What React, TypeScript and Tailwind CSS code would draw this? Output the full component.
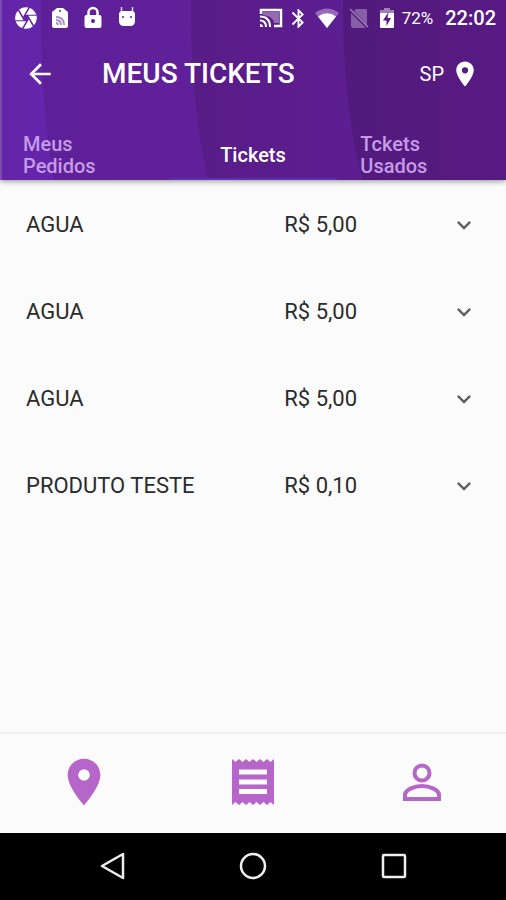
import React from "react";
import {
  MdArrowBack,
  MdBluetooth,
  MdCamera,
  MdExpandMore,
  MdLocationOn,
} from "react-icons/md";

const tickets = [
  { id: 1, title: "AGUA", price: "R$ 5,00" },
  { id: 2, title: "AGUA", price: "R$ 5,00" },
  { id: 3, title: "AGUA", price: "R$ 5,00" },
  { id: 4, title: "PRODUTO TESTE", price: "R$ 0,10" },
];

const HeaderPattern = () => (
  <svg
    className="absolute inset-0 w-full h-full"
    viewBox="0 0 506 180"
    preserveAspectRatio="none"
    aria-hidden="true"
  >
    <defs>
      <linearGradient id="band1">
        <stop offset="0" stopColor="#6325a8" />
        <stop offset="0.1" stopColor="#6525ab" />
      </linearGradient>
      <linearGradient id="band2">
        <stop offset="0" stopColor="#5e2098" />
        <stop offset="0.35" stopColor="#60209a" />
      </linearGradient>
      <linearGradient id="band3">
        <stop offset="0" stopColor="#581c86" />
        <stop offset="0.5" stopColor="#5d1e92" />
      </linearGradient>
      <linearGradient id="band4">
        <stop offset="0" stopColor="#521a7c" />
        <stop offset="1" stopColor="#581a84" />
      </linearGradient>
    </defs>
    <rect width="506" height="180" fill="url(#band1)" />
    <path d="M41 0Q40 100 54 180H506V0z" fill="url(#band2)" />
    <path d="M191 0Q190 100 208 180H506V0z" fill="url(#band3)" />
    <path d="M343 0Q342 100 362 180H506V0z" fill="url(#band4)" />
    <rect width="2" height="180" fill="#7c4bb0" />
  </svg>
);

const StatusBar = () => (
  <div className="flex items-center justify-between h-9 pl-[13px] pr-[10px]">
    {/* notifications */}
    <div className="flex items-center gap-[11px]">
      <MdCamera size={26} />
      <svg width="20" height="22" viewBox="0 0 20 22">
        <path d="M7 1h6l5 4v14q0 2-2 2H4q-2 0-2-2V5z" fill="currentColor" />
        <circle cx="10" cy="4" r="1" fill="#5e2098" />
        <path d="M6 10q8 0 8 8M6 13q5 0 5 5M6 16q2 0 2 2" fill="none" stroke="#a890c4" strokeWidth="2" />
      </svg>
      <svg width="24" height="24" viewBox="0 0 22 24">
        <path d="M6.500 11V6.500a4.500 4.500 0 0 1 9 0V11" fill="none" stroke="currentColor" strokeWidth="2.500" />
        <rect x="2.500" y="9" width="17" height="13" rx="2" fill="currentColor" />
        <circle cx="11" cy="15" r="2" fill="#5e2098" />
      </svg>
      <svg width="22" height="24" viewBox="0 0 22 24">
        <path d="M5.500 1v7M16.500 1v7" stroke="currentColor" strokeWidth="1.500" opacity="0.800" />
        <path d="M5 5h12l2 2v8q0 5-5 5H8q-5 0-5-5V7z" fill="currentColor" />
        <circle cx="7" cy="11" r="1" fill="#5e2098" />
        <circle cx="15" cy="11" r="1" fill="#5e2098" />
      </svg>
    </div>
    {/* system */}
    <div className="flex items-center">
      <svg width="24" height="22" viewBox="0 0 24 22">
        <path d="M4 5h16v11h-5Q14 9 4 8z" fill="currentColor" opacity="0.350" />
        <path d="M2 7V3h20v16h-7" fill="none" stroke="currentColor" strokeWidth="2.500" />
        <path d="M1 9.500q10 0 10 10.500M1 13.500q6 0 6 6.500" fill="none" stroke="currentColor" strokeWidth="2" />
        <path d="M1 17q3 0 3 3H1z" fill="currentColor" />
      </svg>
      <MdBluetooth size={23} className="ml-1" />
      <svg className="ml-1" width="26" height="20" viewBox="0 0 26 20">
        <path d="M1 5Q13-4 25 5L13 20z" fill="currentColor" opacity="0.350" />
        <path d="M4 8.500Q13 2 22 8.500L13 20z" fill="currentColor" />
      </svg>
      <svg className="ml-[9px]" width="20" height="22" viewBox="0 0 20 22">
        <path d="M7 2h10q1 0 1 1v15L5 4zM2 6l15 15H4q-2 0-2-2z" fill="currentColor" opacity="0.300" />
        <path d="M1 2l18 18" stroke="currentColor" strokeWidth="1.500" opacity="0.450" />
      </svg>
      <svg className="ml-[9px]" width="18" height="22" viewBox="0 0 18 22">
        <path d="M6 1h6v2h4v5H2V3h4z" fill="currentColor" opacity="0.450" />
        <path d="M2 6h14v14q0 1-1 1H3q-1 0-1-1z" fill="currentColor" />
        <path d="M10.500 5L5 13.500h3.500V19L13 11H9.500z" fill="#521a7c" />
      </svg>
      <span className="ml-[6px] text-[17px] leading-5">72%</span>
      <span className="ml-3 text-[20px] leading-5 font-medium">22:02</span>
    </div>
  </div>
);

const Header = () => (
  <header className="relative text-white shadow-[0_1px_6px_rgba(0,0,0,0.45)]">
    <HeaderPattern />
    <div className="relative">
      <StatusBar />
      <div className="flex items-center h-[76px] pl-6 pr-[26px]">
        <button type="button" aria-label="Voltar">
          <MdArrowBack size={32} />
        </button>
        <h1 className="flex-1 ml-[46px] text-[28px] leading-8 font-medium">MEUS TICKETS</h1>
        <button type="button" className="flex items-center gap-[6px] text-[20px] leading-6">
          SP
          <MdLocationOn size={30} />
        </button>
      </div>
      {/* tabs */}
      <nav className="grid grid-cols-3 h-[50px] mt-[18px] text-[20px] leading-[22px] font-medium text-[#c59ae6]">
        <a href="#pedidos" className="flex items-center px-[23px]">
          Meus
          <br />
          Pedidos
        </a>
        <a
          href="#tickets"
          aria-current="page"
          className="flex items-center justify-center text-white border-b-2 border-[#5f2db8] pt-[2px]"
        >
          Tickets
        </a>
        <a href="#usados" className="flex items-center px-[23px]">
          Tckets
          <br />
          Usados
        </a>
      </nav>
    </div>
  </header>
);

const TicketList = () => (
  <main className="flex-1">
    <ul className="pt-px">
      {tickets.map((item) => (
        <li key={item.id}>
          <button
            type="button"
            aria-expanded="false"
            className="grid grid-cols-[4fr_3fr] items-center w-full h-[87px] pl-[26px] pr-7 text-left text-[22px] leading-7 text-[#2b2b2b]"
          >
            <span>{item.title}</span>
            <span className="flex items-center justify-between">
              {item.price}
              <MdExpandMore size={28} className="text-[#616161]" />
            </span>
          </button>
        </li>
      ))}
    </ul>
  </main>
);

const BottomNav = () => (
  <nav className="grid grid-cols-3 h-[101px] pb-1 border-t-2 border-[#f0f0f0] text-[#b566c8]">
    <a href="#local" aria-label="Local" className="flex items-center justify-center">
      <MdLocationOn size={56} />
    </a>
    <a href="#tickets" aria-label="Tickets" className="flex items-center justify-center">
      <svg width="42" height="46" viewBox="0 0 42 46" fill="currentColor" fillRule="evenodd">
        <path d="M0 0l3.500 3L7 0l3.500 3L14 0l3.500 3L21 0l3.500 3L28 0l3.500 3L35 0l3.500 3L42 0v46l-3.500-3L35 46l-3.500-3L28 46l-3.500-3L21 46l-3.500-3L14 46l-3.500-3L7 46l-3.500-3L0 46zM7 10.500v5h28v-5zM7 20.500v5h28v-5zM7 30v5h28v-5z" />
      </svg>
    </a>
    <a href="#perfil" aria-label="Perfil" className="flex items-center justify-center">
      <svg width="56" height="56" viewBox="0 0 56 56" fill="none" stroke="currentColor" strokeWidth="4">
        <circle cx="28" cy="19" r="7.500" />
        <path d="M11 45v-4c0-5 9-9 17-9s17 4 17 9v4z" />
      </svg>
    </a>
  </nav>
);

const SystemNav = () => (
  <div className="grid grid-cols-3 h-[67px] pb-px px-[42px] bg-black text-[#eeeeee]">
    <button type="button" aria-label="Back" className="flex items-center justify-center">
      <svg width="30" height="30" viewBox="0 0 30 30" fill="none" stroke="currentColor" strokeWidth="2.500">
        <path d="M26 3v24L5 15z" strokeLinejoin="round" />
      </svg>
    </button>
    <button type="button" aria-label="Home" className="flex items-center justify-center">
      <svg width="30" height="30" viewBox="0 0 30 30" fill="none" stroke="currentColor" strokeWidth="2.500">
        <circle cx="15" cy="15" r="12" />
      </svg>
    </button>
    <button type="button" aria-label="Recents" className="flex items-center justify-center">
      <svg width="30" height="30" viewBox="0 0 30 30" fill="none" stroke="currentColor" strokeWidth="2.500">
        <rect x="4" y="4" width="22" height="22" rx="1" />
      </svg>
    </button>
  </div>
);

const App = () => {
  return (
    <div className="flex flex-col min-h-screen bg-[#fbfbfb] font-[Roboto,sans-serif]">
      <Header />
      <TicketList />
      <BottomNav />
      <SystemNav />
    </div>
  );
};

export default App;
